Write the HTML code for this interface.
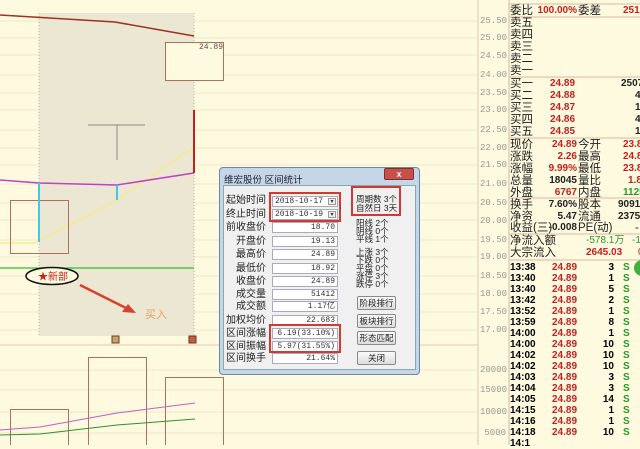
<!DOCTYPE html>
<html><head><meta charset="utf-8"><style>
*{margin:0;padding:0;box-sizing:border-box}
body{width:640px;height:445px;overflow:hidden;background:#fdfadf;position:relative;font-family:"Liberation Sans","Noto Sans CJK SC",sans-serif;font-size:11px}
.a{position:absolute}
.ax{position:absolute;left:480px;width:26px;text-align:right;font-size:9px;color:#9a9a90;font-family:"Liberation Mono",monospace}
.r{position:absolute;left:510px;width:130px;height:12px;line-height:12px;white-space:nowrap;color:#222;font-size:11.5px}
.r span{position:absolute}
.red{color:#c81e1e}.grn{color:#2a9a2a}
.dl{position:absolute;height:13px;line-height:13px;width:46px;text-align:right;color:#222;left:220px;font-size:10px;white-space:nowrap}
.f{position:absolute;left:272px;width:66px;height:11px;background:#fff;border:1px solid #aab;font-size:8px;text-align:right;padding-right:2px;line-height:10px;font-family:"Liberation Mono",monospace;color:#333}
.btn{position:absolute;left:357px;width:39px;height:14px;border:1px solid #8a8a8a;border-radius:2px;background:linear-gradient(#fafafa,#dcdcdc);text-align:center;font-size:8.5px;line-height:12px;color:#222;white-space:nowrap;overflow:hidden}
.tr{position:absolute;left:510px;width:130px;height:11px;line-height:11px;font-size:10px;font-weight:bold;font-family:"Liberation Sans",sans-serif}
</style></head><body>
<svg class="a" style="left:0;top:0" width="640" height="445">
<g stroke="#efe6c8" stroke-width="1">
<line x1="0" y1="21" x2="478" y2="21"/><line x1="0" y1="38" x2="478" y2="38"/><line x1="0" y1="55" x2="478" y2="55"/><line x1="0" y1="75" x2="478" y2="75"/><line x1="0" y1="93" x2="478" y2="93"/><line x1="0" y1="110" x2="478" y2="110"/><line x1="0" y1="130" x2="478" y2="130"/><line x1="0" y1="148" x2="478" y2="148"/><line x1="0" y1="165" x2="478" y2="165"/><line x1="0" y1="184" x2="478" y2="184"/><line x1="0" y1="203" x2="478" y2="203"/><line x1="0" y1="220" x2="478" y2="220"/><line x1="0" y1="240" x2="478" y2="240"/><line x1="0" y1="257" x2="478" y2="257"/><line x1="0" y1="276" x2="478" y2="276"/><line x1="0" y1="294" x2="478" y2="294"/><line x1="0" y1="312" x2="478" y2="312"/><line x1="0" y1="330" x2="478" y2="330"/><line x1="0" y1="370" x2="478" y2="370"/><line x1="0" y1="390" x2="478" y2="390"/><line x1="0" y1="412" x2="478" y2="412"/><line x1="0" y1="433" x2="478" y2="433"/>
</g>
<line x1="0" y1="345" x2="478" y2="345" stroke="#e8c8b0"/>
<line x1="478" y1="0" x2="478" y2="445" stroke="#e0c8b0"/>
<rect x="39" y="13" width="155" height="323" fill="#ebe7d2"/>
<line x1="39" y1="13" x2="39" y2="336" stroke="#b8b4a0" stroke-dasharray="1,2"/>
<line x1="194" y1="13" x2="194" y2="336" stroke="#b8b4a0" stroke-dasharray="1,2"/>
<polyline points="0,15 115,22 194,36" fill="none" stroke="#a03020" stroke-width="1.5"/>
<rect x="165.5" y="42.5" width="58" height="38" fill="#fdfadf" stroke="#b07060"/>
<text x="199" y="49" font-size="8" fill="#555" font-family="Liberation Mono">24.89</text>
<line x1="88" y1="125" x2="145" y2="125" stroke="#888"/><line x1="117" y1="125" x2="117" y2="160" stroke="#888"/>
<polyline points="0,243 35,243 117,200 194,147" fill="none" stroke="#f4ec8c" stroke-width="1.5"/>
<rect x="10.5" y="200.5" width="58" height="53" fill="none" stroke="#b07060"/>
<polyline points="0,180 39,183 117,185 194,173" fill="none" stroke="#c040c8" stroke-width="1.5"/>
<line x1="194" y1="110" x2="194" y2="173" stroke="#c02020" stroke-width="2"/>
<line x1="39" y1="183" x2="39" y2="242" stroke="#40c8e8" stroke-width="2"/>
<line x1="117" y1="185" x2="117" y2="200" stroke="#40c8e8" stroke-width="2"/>
<line x1="0" y1="268" x2="194" y2="268" stroke="#30c030" stroke-width="1.2"/>
<ellipse cx="52" cy="276" rx="26" ry="8.5" fill="#fdfadf" stroke="#111" stroke-width="1.5"/>
<text x="38" y="280" font-size="10" fill="#c82020" font-family="Noto Sans CJK SC">★新部</text>
<line x1="80" y1="285" x2="128" y2="309" stroke="#d84030" stroke-width="2.5"/>
<polygon points="136,313 122,312 128,304" fill="#d84030"/>
<text x="145" y="318" font-size="11" fill="#e8a060" font-family="Noto Sans CJK SC">买入</text>
<rect x="112" y="336" width="7" height="7" fill="#c8a070" stroke="#6a4020"/>
<rect x="189" y="336" width="7" height="7" fill="#c06040" stroke="#6a3020"/>
<rect x="10.5" y="409.5" width="58" height="40" fill="none" stroke="#b07060"/>
<rect x="88.5" y="357.5" width="58" height="90" fill="none" stroke="#b07060"/>
<rect x="165.5" y="377.5" width="58" height="70" fill="none" stroke="#b07060"/>
<polyline points="0,430 40,427 117,413 195,403" fill="none" stroke="#c060c0"/>
<polyline points="0,435 40,434 117,425 195,419" fill="none" stroke="#309030"/>
<line x1="509" y1="0" x2="509" y2="445" stroke="#d8b8a0"/>
<g stroke="#e0b8a0"><line x1="509" y1="4" x2="640" y2="4"/><line x1="509" y1="17" x2="640" y2="17"/><line x1="509" y1="77" x2="640" y2="77"/><line x1="509" y1="138" x2="640" y2="138"/><line x1="509" y1="198" x2="640" y2="198"/><line x1="509" y1="234" x2="640" y2="234"/><line x1="509" y1="260" x2="640" y2="260"/></g>
<circle cx="642" cy="268" r="8" fill="#40b040"/>
</svg>
<div class="ax" style="top:16px">25.50</div><div class="ax" style="top:33px">25.00</div><div class="ax" style="top:51px">24.50</div><div class="ax" style="top:70px">24.00</div><div class="ax" style="top:88px">23.50</div><div class="ax" style="top:105px">23.00</div><div class="ax" style="top:125px">22.50</div><div class="ax" style="top:143px">22.00</div><div class="ax" style="top:160px">21.50</div><div class="ax" style="top:179px">21.00</div><div class="ax" style="top:198px">20.50</div><div class="ax" style="top:216px">20.00</div><div class="ax" style="top:235px">19.50</div><div class="ax" style="top:252px">19.00</div><div class="ax" style="top:271px">18.50</div><div class="ax" style="top:289px">18.00</div><div class="ax" style="top:307px">17.50</div><div class="ax" style="top:325px">17.00</div><div class="ax" style="top:365px">20000</div><div class="ax" style="top:385px">15000</div><div class="ax" style="top:407px">10000</div><div class="ax" style="top:428px">5000</div>

<div class="r" style="top:5px"><span>委比</span><span class="red" style="right:63px;font-size:10px;font-weight:bold">100.00%</span><span style="left:68px">委差</span><span class="red" style="left:113px;font-size:10px;font-weight:bold">2519</span></div>
<div class="r" style="top:17px">卖五</div><div class="r" style="top:29px">卖四</div><div class="r" style="top:41px">卖三</div><div class="r" style="top:53px">卖二</div><div class="r" style="top:65px">卖一</div>
<div class="r" style="top:78px"><span>买一</span><span class="red" style="left:40px;font-size:10px;font-weight:bold">24.89</span><span style="left:111px;font-size:10px;font-weight:bold">2507</span></div>
<div class="r" style="top:90px"><span>买二</span><span class="red" style="left:40px;font-size:10px;font-weight:bold">24.88</span><span style="left:125px;font-size:10px;font-weight:bold">4</span></div>
<div class="r" style="top:102px"><span>买三</span><span class="red" style="left:40px;font-size:10px;font-weight:bold">24.87</span><span style="left:125px;font-size:10px;font-weight:bold">1</span></div>
<div class="r" style="top:114px"><span>买四</span><span class="red" style="left:40px;font-size:10px;font-weight:bold">24.86</span><span style="left:125px;font-size:10px;font-weight:bold">4</span></div>
<div class="r" style="top:126px"><span>买五</span><span class="red" style="left:40px;font-size:10px;font-weight:bold">24.85</span><span style="left:125px;font-size:10px;font-weight:bold">1</span></div>
<div class="r" style="top:139px"><span>现价</span><span class="red" style="right:63px;font-size:10px;font-weight:bold">24.89</span><span style="left:68px">今开</span><span class="red" style="left:113px;font-size:10px;font-weight:bold">23.8</span></div>
<div class="r" style="top:151px"><span>涨跌</span><span class="red" style="right:63px;font-size:10px;font-weight:bold">2.26</span><span style="left:68px">最高</span><span class="red" style="left:113px;font-size:10px;font-weight:bold">24.8</span></div>
<div class="r" style="top:163px"><span>涨幅</span><span class="red" style="right:63px;font-size:10px;font-weight:bold">9.99%</span><span style="left:68px">最低</span><span class="red" style="left:113px;font-size:10px;font-weight:bold">23.8</span></div>
<div class="r" style="top:175px"><span>总量</span><span style="right:63px;font-size:10px;font-weight:bold">18045</span><span style="left:68px">量比</span><span class="red" style="left:118px;font-size:10px;font-weight:bold">1.8</span></div>
<div class="r" style="top:187px"><span>外盘</span><span class="red" style="right:63px;font-size:10px;font-weight:bold">6767</span><span style="left:68px">内盘</span><span class="grn" style="left:113px;font-size:10px;font-weight:bold">1125</span></div>
<div class="r" style="top:199px"><span>换手</span><span style="right:63px;font-size:10px;font-weight:bold">7.60%</span><span style="left:68px">股本</span><span style="left:108px;font-size:10px;font-weight:bold">9091万</span></div>
<div class="r" style="top:211px"><span>净资</span><span style="right:63px;font-size:10px;font-weight:bold">5.47</span><span style="left:68px">流通</span><span style="left:108px;font-size:10px;font-weight:bold">2375万</span></div>
<div class="r" style="top:222px"><span>收益(三)</span><span style="right:63px;font-size:10px;font-weight:bold">-0.008</span><span style="left:68px">PE(动)</span><span style="left:125px">-</span></div>
<div class="r" style="top:235px"><span>净流入额</span><span class="grn" style="left:76px;font-size:10px">-578.1万</span><span class="grn" style="left:122px;font-size:10px">-13</span></div>
<div class="r" style="top:247px"><span>大宗流入</span><span class="red" style="left:76px;font-size:10px;font-weight:bold">2645.03</span><span class="red" style="left:128px;font-size:10px">0</span></div>

<div class="tr" style="top:262px"><span class="a" style="left:0">13:38</span><span class="a red" style="left:42px">24.89</span><span class="a" style="right:26px">3</span><span class="a grn" style="left:113px">S</span></div>
<div class="tr" style="top:273px"><span class="a" style="left:0">13:40</span><span class="a red" style="left:42px">24.89</span><span class="a" style="right:26px">1</span><span class="a grn" style="left:113px">S</span></div>
<div class="tr" style="top:284px"><span class="a" style="left:0">13:40</span><span class="a red" style="left:42px">24.89</span><span class="a" style="right:26px">5</span><span class="a grn" style="left:113px">S</span></div>
<div class="tr" style="top:295px"><span class="a" style="left:0">13:42</span><span class="a red" style="left:42px">24.89</span><span class="a" style="right:26px">2</span><span class="a grn" style="left:113px">S</span></div>
<div class="tr" style="top:306px"><span class="a" style="left:0">13:52</span><span class="a red" style="left:42px">24.89</span><span class="a" style="right:26px">1</span><span class="a grn" style="left:113px">S</span></div>
<div class="tr" style="top:317px"><span class="a" style="left:0">13:59</span><span class="a red" style="left:42px">24.89</span><span class="a" style="right:26px">8</span><span class="a grn" style="left:113px">S</span></div>
<div class="tr" style="top:328px"><span class="a" style="left:0">14:00</span><span class="a red" style="left:42px">24.89</span><span class="a" style="right:26px">1</span><span class="a grn" style="left:113px">S</span></div>
<div class="tr" style="top:339px"><span class="a" style="left:0">14:00</span><span class="a red" style="left:42px">24.89</span><span class="a" style="right:26px">10</span><span class="a grn" style="left:113px">S</span></div>
<div class="tr" style="top:350px"><span class="a" style="left:0">14:02</span><span class="a red" style="left:42px">24.89</span><span class="a" style="right:26px">10</span><span class="a grn" style="left:113px">S</span></div>
<div class="tr" style="top:361px"><span class="a" style="left:0">14:02</span><span class="a red" style="left:42px">24.89</span><span class="a" style="right:26px">10</span><span class="a grn" style="left:113px">S</span></div>
<div class="tr" style="top:372px"><span class="a" style="left:0">14:03</span><span class="a red" style="left:42px">24.89</span><span class="a" style="right:26px">3</span><span class="a grn" style="left:113px">S</span></div>
<div class="tr" style="top:383px"><span class="a" style="left:0">14:04</span><span class="a red" style="left:42px">24.89</span><span class="a" style="right:26px">3</span><span class="a grn" style="left:113px">S</span></div>
<div class="tr" style="top:394px"><span class="a" style="left:0">14:05</span><span class="a red" style="left:42px">24.89</span><span class="a" style="right:26px">14</span><span class="a grn" style="left:113px">S</span></div>
<div class="tr" style="top:405px"><span class="a" style="left:0">14:15</span><span class="a red" style="left:42px">24.89</span><span class="a" style="right:26px">1</span><span class="a grn" style="left:113px">S</span></div>
<div class="tr" style="top:416px"><span class="a" style="left:0">14:16</span><span class="a red" style="left:42px">24.89</span><span class="a" style="right:26px">1</span><span class="a grn" style="left:113px">S</span></div>
<div class="tr" style="top:427px"><span class="a" style="left:0">14:18</span><span class="a red" style="left:42px">24.89</span><span class="a" style="right:26px">10</span><span class="a grn" style="left:113px">S</span></div>
<div class="tr" style="top:438px"><span class="a" style="left:0">14:1</span></div>

<!-- dialog -->
<div class="a" style="left:219px;top:167px;width:201px;height:208px;background:#c4d6e8;border:1px solid #6a88a8;border-radius:4px"></div>
<div class="a" style="left:224px;top:172px;font-size:9.5px;color:#223">维宏股份 区间统计</div>
<div class="a" style="left:384px;top:168px;width:30px;height:12px;background:#c8504a;border:1px solid #803030;border-radius:2px;color:#fff;font-size:9px;text-align:center;line-height:11px;font-weight:bold">x</div>
<div class="a" style="left:223px;top:185px;width:193px;height:185px;background:#f0f0f0;border:1px solid #8aa"></div>
<div class="dl" style="top:194px">起始时间</div><div class="dl" style="top:208px">终止时间</div><div class="dl" style="top:221px">前收盘价</div><div class="dl" style="top:235px">开盘价</div><div class="dl" style="top:248px">最高价</div><div class="dl" style="top:262px">最低价</div><div class="dl" style="top:275px">收盘价</div><div class="dl" style="top:288px">成交量</div><div class="dl" style="top:300px">成交额</div><div class="dl" style="top:314px">加权均价</div><div class="dl" style="top:327px">区间涨幅</div><div class="dl" style="top:340px">区间振幅</div><div class="dl" style="top:352px">区间换手</div>
<div class="f" style="top:196px;text-align:left;padding-left:2px">2018-10-17<span style="position:absolute;right:1px;top:1px;width:8px;height:7px;border:1px solid #999;background:#eee;font-size:6px;line-height:5px;text-align:center">▾</span></div>
<div class="f" style="top:209px;text-align:left;padding-left:2px">2018-10-19<span style="position:absolute;right:1px;top:1px;width:8px;height:7px;border:1px solid #999;background:#eee;font-size:6px;line-height:5px;text-align:center">▾</span></div>
<div class="f" style="top:222px">18.70</div><div class="f" style="top:236px">19.13</div><div class="f" style="top:249px">24.89</div><div class="f" style="top:263px">18.92</div><div class="f" style="top:276px">24.89</div><div class="f" style="top:289px">51412</div><div class="f" style="top:301px">1.17亿</div><div class="f" style="top:315px">22.683</div><div class="f" style="top:328px">6.19(33.10%)</div><div class="f" style="top:341px">5.97(31.55%)</div><div class="f" style="top:353px">21.64%</div>
<div class="a" style="left:269px;top:192px;width:72px;height:30px;border:2px solid #d03a30"></div>
<div class="a" style="left:269px;top:324px;width:72px;height:29px;border:2px solid #d03a30"></div>
<div class="a" style="left:351px;top:186px;width:50px;height:30px;border:2px solid #d03a30"></div>
<div class="a" style="left:356px;top:195px;font-size:8.5px;line-height:9px;color:#222">周期数 3个<br>自然日 3天</div>
<div class="a" style="left:356px;top:219px;font-size:8.5px;line-height:8px;color:#222">阳线 2个<br>阴线 0个<br>平线 1个</div>
<div class="a" style="left:356px;top:248px;font-size:8.5px;line-height:8px;color:#222">上涨 3个<br>下跌 0个<br>平盘 0个<br>涨停 3个<br>跌停 0个</div>
<div class="btn" style="top:296px">阶段排行</div>
<div class="btn" style="top:314px">板块排行</div>
<div class="btn" style="top:331px">形态匹配</div>
<div class="btn" style="top:351px">关闭</div>
</body></html>
